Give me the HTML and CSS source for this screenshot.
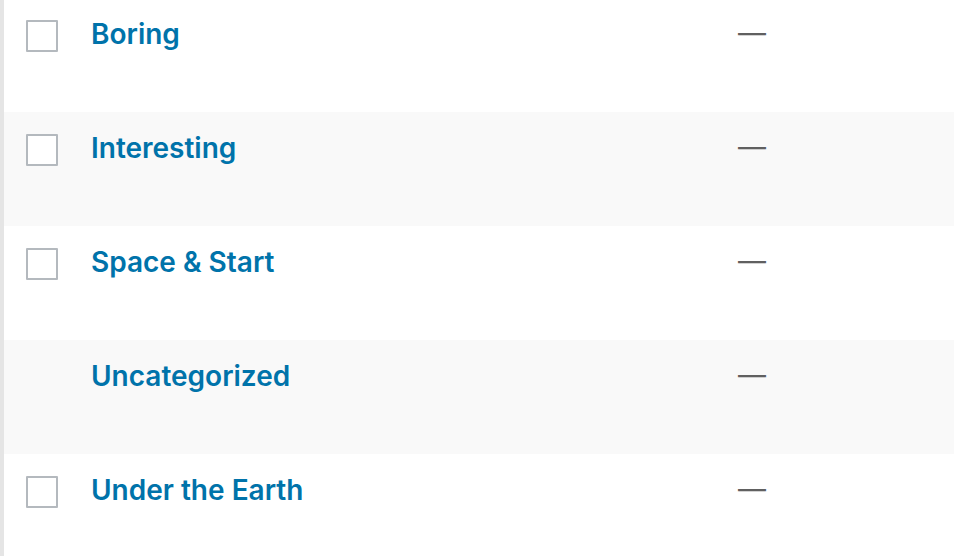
FILE: index.html
```html
<!DOCTYPE html>
<html lang="en">
<head>
    <meta charset="UTF-8">
    <meta name="viewport" content="width=device-width, initial-scale=1.0">
    <title>Categories</title>
    <link rel="stylesheet" href="styles.css">
</head>
<body>
    <div class="wrap">
        <table class="terms">
            <tbody>
                <tr>
                    <td class="check"><span class="box"></span></td>
                    <td class="name"><a href="#">Boring</a></td>
                    <td class="desc"><span class="dash">—</span></td>
                </tr>
                <tr class="alt">
                    <td class="check"><span class="box"></span></td>
                    <td class="name"><a href="#">Interesting</a></td>
                    <td class="desc"><span class="dash">—</span></td>
                </tr>
                <tr>
                    <td class="check"><span class="box"></span></td>
                    <td class="name"><a href="#">Space &amp; Start</a></td>
                    <td class="desc"><span class="dash">—</span></td>
                </tr>
                <tr class="alt">
                    <td class="check"></td>
                    <td class="name"><a href="#">Uncategorized</a></td>
                    <td class="desc"><span class="dash">—</span></td>
                </tr>
                <tr>
                    <td class="check"><span class="box"></span></td>
                    <td class="name"><a href="#">Under the Earth</a></td>
                    <td class="desc"><span class="dash">—</span></td>
                </tr>
            </tbody>
        </table>
    </div>
</body>
</html>
```

FILE: styles.css
```css
body { margin: 0; background: #fff; font-family: Inter, "Open Sans", sans-serif; overflow: hidden; }
.wrap { border-left: 4px solid #e5e5e5; min-height: 100vh; }
.terms { width: 100%; border-collapse: collapse; margin-top: -2px; }
.terms tr { height: 114px; }
.terms tr.alt { background: #f9f9f9; }
.terms td { vertical-align: top; padding: 0; }
.check { width: 65px; padding-top: 22px !important; padding-left: 22px !important; }
.box { display: block; width: 28px; height: 28px; border: 2px solid #b4b9be; background: #fff; border-radius: 1px; }
.name { width: 647px; padding-top: 16px !important; line-height: 40px; }
.name a { color: #0073aa; text-decoration: none; font-size: 28px; font-weight: 600; }
.desc { padding-top: 15px !important; line-height: 40px; }
.dash { color: #606060; font-size: 28px; }
```
